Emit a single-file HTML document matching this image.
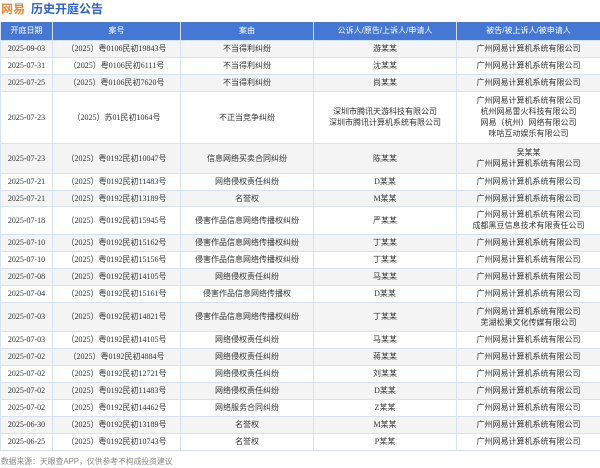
<!DOCTYPE html>
<html><head><meta charset="utf-8"><style>
*{margin:0;padding:0;box-sizing:border-box}
body{width:600px;height:468px;background:#fff;font-family:"Liberation Serif","Noto Sans CJK SC",serif;color:#333;overflow:hidden;position:relative}
.t{position:absolute;left:1px;top:1px;font-family:"Liberation Sans","Noto Sans CJK SC",sans-serif;font-size:12px;font-weight:bold;line-height:16px}
.t .a{color:#f0883a}.t .b{color:#2f62d0;margin-left:6px}
table{position:absolute;left:0;top:22px;width:600px;border-collapse:collapse;table-layout:fixed;font-size:8px}
th{background:#4578d4;color:#fff;height:18px;font-family:"Liberation Sans","Noto Sans CJK SC",sans-serif;font-weight:normal;font-size:8px;border:1px solid #d4e2f4;border-top:none}
td{border:1px solid #d4e2f4;text-align:center;line-height:11px;padding:0;white-space:nowrap}
tr:nth-child(even) td{background:#f4f4f4}
.f{position:absolute;left:1px;top:456px;font-family:"Liberation Sans","Noto Sans CJK SC",sans-serif;font-size:7.8px;color:#888}
</style></head><body>
<div class="t"><span class="a">网易</span><span class="b">历史开庭公告</span></div>
<table>
<colgroup><col style="width:52px"><col style="width:128px"><col style="width:133px"><col style="width:143px"><col style="width:144px"></colgroup>
<tr><th>开庭日期</th><th>案号</th><th>案由</th><th>公诉人/原告/上诉人/申请人</th><th>被告/被上诉人/被申请人</th></tr>
<tr style="height:17px"><td>2025-09-03</td><td>（2025）粤0106民初19843号</td><td>不当得利纠纷</td><td>游某某</td><td>广州网易计算机系统有限公司</td></tr>
<tr style="height:17px"><td>2025-07-31</td><td>（2025）粤0106民初6111号</td><td>不当得利纠纷</td><td>沈某某</td><td>广州网易计算机系统有限公司</td></tr>
<tr style="height:17px"><td>2025-07-25</td><td>（2025）粤0106民初7620号</td><td>不当得利纠纷</td><td>尚某某</td><td>广州网易计算机系统有限公司</td></tr>
<tr style="height:52px"><td>2025-07-23</td><td>（2025）苏01民初1064号</td><td>不正当竞争纠纷</td><td>深圳市腾讯天游科技有限公司<br>深圳市腾讯计算机系统有限公司</td><td>广州网易计算机系统有限公司<br>杭州网易雷火科技有限公司<br>网易（杭州）网络有限公司<br>咪咕互动娱乐有限公司</td></tr>
<tr style="height:30px"><td>2025-07-23</td><td>（2025）粤0192民初10047号</td><td>信息网络买卖合同纠纷</td><td>陈某某</td><td>吴某某<br>广州网易计算机系统有限公司</td></tr>
<tr style="height:17px"><td>2025-07-21</td><td>（2025）粤0192民初11483号</td><td>网络侵权责任纠纷</td><td>D某某</td><td>广州网易计算机系统有限公司</td></tr>
<tr style="height:16px"><td>2025-07-21</td><td>（2025）粤0192民初13189号</td><td>名誉权</td><td>M某某</td><td>广州网易计算机系统有限公司</td></tr>
<tr style="height:28px"><td>2025-07-18</td><td>（2025）粤0192民初15945号</td><td>侵害作品信息网络传播权纠纷</td><td>严某某</td><td>广州网易计算机系统有限公司<br>成都黑豆信息技术有限责任公司</td></tr>
<tr style="height:17px"><td>2025-07-10</td><td>（2025）粤0192民初15162号</td><td>侵害作品信息网络传播权纠纷</td><td>丁某某</td><td>广州网易计算机系统有限公司</td></tr>
<tr style="height:17px"><td>2025-07-10</td><td>（2025）粤0192民初15156号</td><td>侵害作品信息网络传播权纠纷</td><td>丁某某</td><td>广州网易计算机系统有限公司</td></tr>
<tr style="height:17px"><td>2025-07-08</td><td>（2025）粤0192民初14105号</td><td>网络侵权责任纠纷</td><td>马某某</td><td>广州网易计算机系统有限公司</td></tr>
<tr style="height:17px"><td>2025-07-04</td><td>（2025）粤0192民初15161号</td><td>侵害作品信息网络传播权</td><td>D某某</td><td>广州网易计算机系统有限公司</td></tr>
<tr style="height:29px"><td>2025-07-03</td><td>（2025）粤0192民初14821号</td><td>侵害作品信息网络传播权纠纷</td><td>丁某某</td><td>广州网易计算机系统有限公司<br>芜湖松果文化传媒有限公司</td></tr>
<tr style="height:17px"><td>2025-07-03</td><td>（2025）粤0192民初14105号</td><td>网络侵权责任纠纷</td><td>马某某</td><td>广州网易计算机系统有限公司</td></tr>
<tr style="height:17px"><td>2025-07-02</td><td>（2025）粤0192民初4884号</td><td>网络侵权责任纠纷</td><td>蒋某某</td><td>广州网易计算机系统有限公司</td></tr>
<tr style="height:17px"><td>2025-07-02</td><td>（2025）粤0192民初12721号</td><td>网络侵权责任纠纷</td><td>刘某某</td><td>广州网易计算机系统有限公司</td></tr>
<tr style="height:17px"><td>2025-07-02</td><td>（2025）粤0192民初11483号</td><td>网络侵权责任纠纷</td><td>D某某</td><td>广州网易计算机系统有限公司</td></tr>
<tr style="height:17px"><td>2025-07-02</td><td>（2025）粤0192民初14462号</td><td>网络服务合同纠纷</td><td>Z某某</td><td>广州网易计算机系统有限公司</td></tr>
<tr style="height:17px"><td>2025-06-30</td><td>（2025）粤0192民初13189号</td><td>名誉权</td><td>M某某</td><td>广州网易计算机系统有限公司</td></tr>
<tr style="height:17px"><td>2025-06-25</td><td>（2025）粤0192民初10743号</td><td>名誉权</td><td>P某某</td><td>广州网易计算机系统有限公司</td></tr>
</table>
<div class="f">数据来源：天眼查APP，仅供参考不构成投资建议</div>
</body></html>
